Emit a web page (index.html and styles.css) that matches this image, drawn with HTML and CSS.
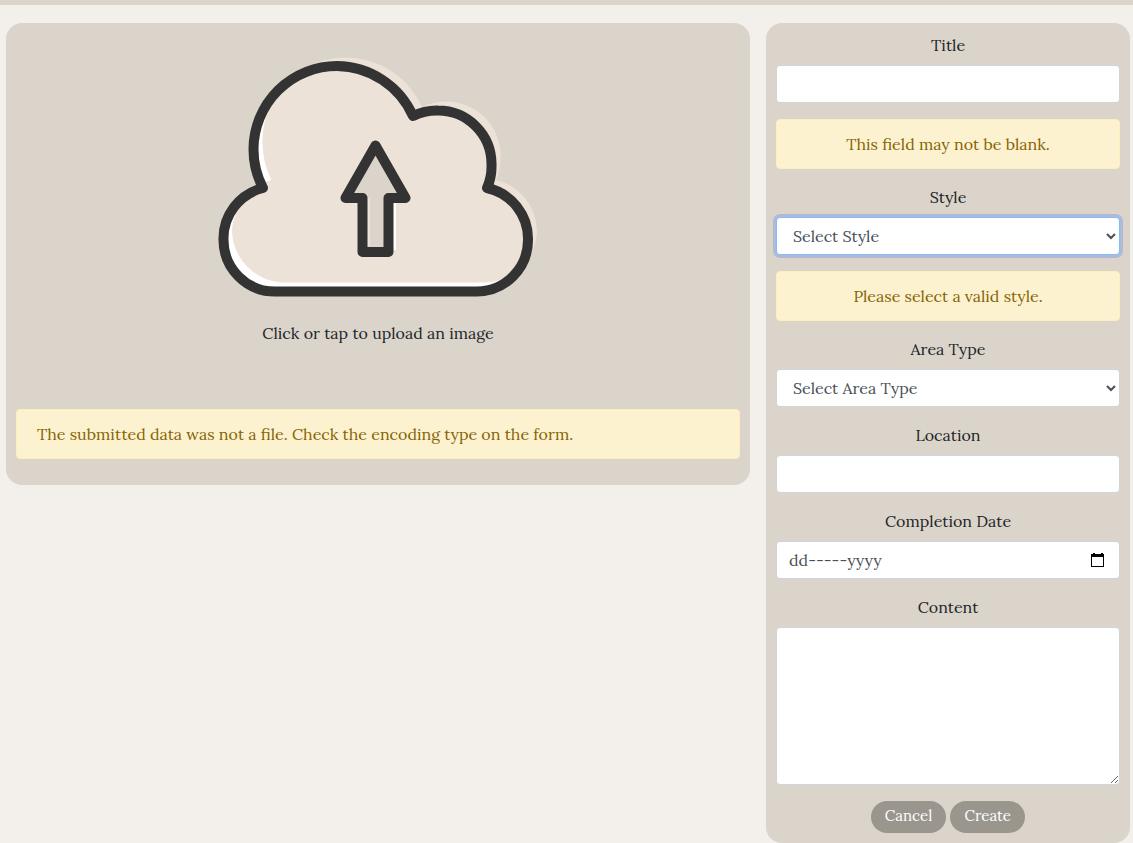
FILE: index.html
```html
<!DOCTYPE html>
<html lang="en">
<head>
<meta charset="utf-8">
<meta name="viewport" content="width=device-width, initial-scale=1">
<title>Create post</title>
<link rel="stylesheet" href="styles.css">
</head>
<body>
<header class="topbar"></header>
<form class="layout" novalidate>
  <section class="card upload">
    <label class="upload-label" for="image">
      <svg class="upload-icon" viewBox="218 57 320 240" aria-hidden="true">
        <path fill="#fff" d="M263 188A84 84 0 0 1 253.500 149A83.500 83.500 0 0 1 337 66A84 84 0 0 1 413 116A54 54 0 0 1 438 110.500A53.500 53.500 0 0 1 491.500 164A54 54 0 0 1 487 188A52 52 0 0 1 528 240A51.500 51.500 0 0 1 477 291.500H275A51.500 51.500 0 0 1 223.500 240A52 52 0 0 1 263 188Z"/>
        <path fill="#ece2d7" d="M271.500 180A84 84 0 0 1 262.500 140A83 83 0 0 1 345 57.500A84 84 0 0 1 422 107A54 54 0 0 1 446 101.500A54 54 0 0 1 500.500 155A54 54 0 0 1 496 180A53 53 0 0 1 537 231A53 53 0 0 1 484 282.500H285A53 53 0 0 1 232 229A53 53 0 0 1 240 206L262 190L265 182Z"/>
        <path fill="#fff" d="M393 203h3v47h-3z"/>
        <path fill="#dbd4ca" d="M375 145L406 198H388V252H362V198H345Z"/>
        <path fill="#ece2d7" d="M367 198h3v48h-3z"/>
        <path class="stroke" d="M263 188A84 84 0 0 1 253.500 149A83.500 83.500 0 0 1 337 66A84 84 0 0 1 413 116A54 54 0 0 1 438 110.500A53.500 53.500 0 0 1 491.500 164A54 54 0 0 1 487 188A52 52 0 0 1 528 240A51.500 51.500 0 0 1 477 291.500H275A51.500 51.500 0 0 1 223.500 240A52 52 0 0 1 263 188Z"/>
        <path class="stroke" d="M375.500 145.500L405.500 198H388.500V252H362.500V198H345.500Z"/>
      </svg>
      <span>Click or tap to upload an image</span>
    </label>
    <input class="file" type="file" id="image" accept="image/*">
    <div class="alert alert-left" role="alert">The submitted data was not a file. Check the encoding type on the form.</div>
  </section>
  <section class="card fields">
    <div class="group">
      <label for="title">Title</label>
      <input class="control" type="text" id="title">
    </div>
    <div class="alert" role="alert">This field may not be blank.</div>
    <div class="group">
      <label for="style">Style</label>
      <select class="control focused" id="style"><option>Select Style</option></select>
    </div>
    <div class="alert" role="alert">Please select a valid style.</div>
    <div class="group">
      <label for="area">Area Type</label>
      <select class="control" id="area"><option>Select Area Type</option></select>
    </div>
    <div class="group">
      <label for="location">Location</label>
      <input class="control" type="text" id="location">
    </div>
    <div class="group">
      <label for="date">Completion Date</label>
      <div class="date">
        <input class="control" type="text" id="date" placeholder="dd-----yyyy">
        <svg class="calendar" viewBox="0 0 14 14" aria-hidden="true"><path fill="#000" fill-rule="evenodd" d="M2 0h2v1h6V0h2v1h1v13H0V1h2zM1 4v9h11V4z"/></svg>
      </div>
    </div>
    <div class="group">
      <label for="content">Content</label>
      <textarea class="control area" id="content"></textarea>
    </div>
    <div class="actions">
      <button class="btn" type="button">Cancel</button>
      <button class="btn" type="submit">Create</button>
    </div>
  </section>
</form>
</body>
</html>
```
FILE: styles.css
```css
*, *::before, *::after { box-sizing: border-box; }
body {
  margin: 0;
  background: #f3f0eb;
  color: #212529;
  font-family: Lora, "Liberation Serif", serif;
  font-size: 16px;
  line-height: 24px;
}
.topbar { height: 5px; background: #dbd4ca; }
.layout {
  display: grid;
  grid-template-columns: minmax(0, 186fr) minmax(0, 91fr);
  align-items: start;
  gap: 16px;
  padding: 18px 3px 0 6px;
}
.card { background: #dbd4ca; border-radius: 16px; padding: 10px; }
.fields { display: flex; flex-direction: column; gap: 16px; text-align: center; }
.upload { padding-bottom: 26px; }
.upload-label {
  display: flex;
  flex-direction: column;
  align-items: center;
  gap: 24px;
  padding: 24px 0 64px;
  cursor: pointer;
}
.upload-icon { width: 320px; height: 240px; max-width: 100%; overflow: visible; }
.stroke { fill: none; stroke: #333; stroke-width: 10px; stroke-linejoin: round; }
.file { display: none; }
.alert {
  padding: 12px 20px;
  border: 1px solid #ffeeba;
  border-radius: 4px;
  background: #fdf2cf;
  color: #856404;
  text-align: center;
}
.alert-left { text-align: left; }
.group { display: flex; flex-direction: column; gap: 8px; }
.control {
  display: block;
  width: 100%;
  height: 38px;
  padding: 6px 12px;
  border: 1px solid #ced4da;
  border-radius: 4px;
  background: #fff;
  color: #495057;
  font: inherit;
}
.control::placeholder { color: #495057; opacity: 1; }
.control:focus, .focused {
  border-color: #80bdff;
  outline: 0;
  box-shadow: 0 0 0 3px #b0b9d6;
}
.area { height: 158px; resize: vertical; }
.date { position: relative; }
.calendar { position: absolute; top: 12px; right: 15px; width: 14px; height: 14px; }
.actions { display: flex; justify-content: center; gap: 4px; }
.btn {
  min-width: 75px;
  height: 32px;
  padding: 0 14px 2px;
  border: 0;
  border-radius: 16px;
  background: #9a968e;
  color: #fff;
  font: inherit;
  font-size: 15px;
}
```
